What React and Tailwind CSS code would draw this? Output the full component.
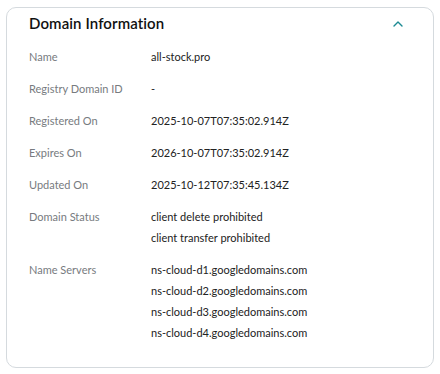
const rows = [
  { label: 'Name', values: ['all-stock.pro'] },
  { label: 'Registry Domain ID', values: ['-'] },
  { label: 'Registered On', values: ['2025-10-07T07:35:02.914Z'] },
  { label: 'Expires On', values: ['2026-10-07T07:35:02.914Z'] },
  { label: 'Updated On', values: ['2025-10-12T07:35:45.134Z'] },
  { label: 'Domain Status', values: ['client delete prohibited', 'client transfer prohibited'] },
  {
    label: 'Name Servers',
    values: [
      'ns-cloud-d1.googledomains.com',
      'ns-cloud-d2.googledomains.com',
      'ns-cloud-d3.googledomains.com',
      'ns-cloud-d4.googledomains.com',
    ],
  },
]

export default function App() {
  return (
    <div className="w-[440px] h-[374px] bg-white pt-[7px] pl-[6px] font-['Lato','Liberation_Sans',sans-serif]">
      <div className="w-[428px] h-[361px] border border-[#d5dade] rounded-[10px] bg-white">
        <div className="flex items-center justify-between pl-[22px] pr-[30px] pt-[3px] h-[27px]">
          <h2 className="text-[15px] leading-[24px] font-semibold text-[#111111] tracking-[0.1px]">Domain Information</h2>
          <svg width="10" height="6" viewBox="0 0 10 6" fill="none" className="mt-[1px]">
            <path d="M1 5 L5 1 L9 5" stroke="#1b8a93" strokeWidth="1.4" strokeLinecap="round" strokeLinejoin="round" />
          </svg>
        </div>
        <div className="mt-[11px] px-[22px] flex flex-col gap-[11px]">
          {rows.map(r => (
            <div key={r.label} className="flex text-[11px] leading-[21px]">
              <div className="w-[122px] shrink-0 text-[#777b80]">{r.label}</div>
              <div className="flex flex-col text-[#222222]">
                {r.values.map(v => (
                  <span key={v}>{v}</span>
                ))}
              </div>
            </div>
          ))}
        </div>
      </div>
    </div>
  )
}
